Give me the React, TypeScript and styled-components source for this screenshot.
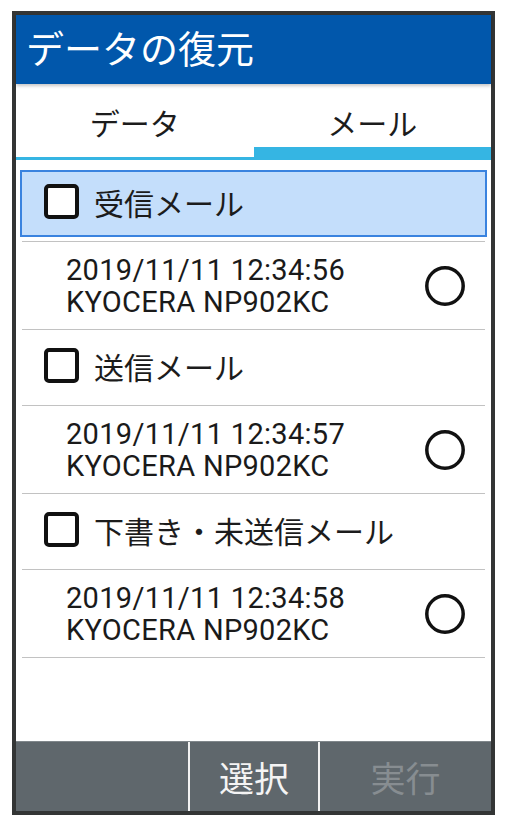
import React from "react";
import styled, { createGlobalStyle } from "styled-components";

const GlobalStyle = createGlobalStyle`
  html, body {
    margin: 0;
    padding: 0;
    background: #ffffff;
  }
  body {
    font-family: Roboto, "Noto Sans CJK JP", sans-serif;
  }
  * { box-sizing: border-box; }
`;

const Page = styled.div`
  padding: 11px 0 0 12px;
`;

const Frame = styled.div`
  width: 483px;
  height: 804px;
  border: 4px solid #333535;
  display: flex;
  flex-direction: column;
  background: #ffffff;
`;

const TitleBar = styled.header`
  height: 69px;
  flex: none;
  background: #0157ab;
  color: #ffffff;
  display: flex;
  align-items: center;
  padding-left: 10px;
  font-size: 38px;
  line-height: 1;
  position: relative;
  z-index: 1;
  box-shadow: 0 2px 3px rgba(0, 0, 0, 0.22);
`;

const Tabs = styled.nav`
  height: 76px;
  flex: none;
  display: grid;
  grid-template-columns: 1fr 1fr;
`;

const Tab = styled.div<{ $active?: boolean }>`
  display: flex;
  align-items: center;
  justify-content: center;
  font-size: 30px;
  color: #1c1c1c;
  box-shadow: inset 0 ${(p) => (p.$active ? "-13px" : "-3px")} 0 #35b5e3;
`;

const List = styled.div`
  flex: 1;
  padding: 6px 6px 0 6px;
  display: flex;
  flex-direction: column;
`;

const GroupRow = styled.div`
  height: 76px;
  border-bottom: 1px solid #c2c2c2;
  padding: 4px 0;
  display: flex;
`;

const GroupInner = styled.div<{ $selected?: boolean }>`
  flex: 1;
  margin: 0 -2px;
  border: 2px solid ${(p) => (p.$selected ? "#3a83df" : "transparent")};
  background: ${(p) => (p.$selected ? "#c4defb" : "transparent")};
  display: flex;
  align-items: center;
  padding: 0 0 4px 22px;
  gap: 15px;
  font-size: 30px;
  color: #1c1c1c;
`;

const CheckBox = styled.span`
  width: 35px;
  height: 35px;
  border: 4px solid #111111;
  border-radius: 5px;
  background: #ffffff;
  flex: none;
`;

const ItemRow = styled.div`
  height: 88px;
  border-bottom: 1px solid #c2c2c2;
  display: flex;
  align-items: center;
  padding: 0 20px 0 44px;
`;

const ItemText = styled.div`
  flex: 1;
  font-size: 29px;
  line-height: 32px;
  color: #1a1a1a;
  letter-spacing: 0.3px;
`;

const Radio = styled.svg`
  width: 40px;
  height: 40px;
  flex: none;
`;

const Footer = styled.footer`
  height: 70px;
  flex: none;
  background: #5f676c;
  border-top: 1px solid #80878b;
  display: grid;
  grid-template-columns: 172px 130px 1fr;
`;

const FooterCell = styled.div<{ $divider?: boolean; $disabled?: boolean }>`
  display: flex;
  align-items: center;
  justify-content: center;
  border-left: ${(p) => (p.$divider ? "2px solid #f2f2f2" : "none")};
  font-size: 35px;
  color: ${(p) => (p.$disabled ? "#878d91" : "#f4f4f4")};
`;

const RadioIcon = () => (
  <Radio viewBox="0 0 40 40">
    <circle cx="20" cy="20" r="18.2" fill="none" stroke="#111" strokeWidth="3.5" />
  </Radio>
);

type Group = {
  name: string;
  selected?: boolean;
  date: string;
};

const groups: Group[] = [
  { name: "受信メール", selected: true, date: "2019/11/11 12:34:56" },
  { name: "送信メール", date: "2019/11/11 12:34:57" },
  { name: "下書き・未送信メール", date: "2019/11/11 12:34:58" },
];

export default function App() {
  return (
    <>
      <GlobalStyle />
      <Page>
        <Frame>
          <TitleBar>データの復元</TitleBar>
          <Tabs>
            <Tab>データ</Tab>
            <Tab $active>メール</Tab>
          </Tabs>
          <List>
            {groups.map((g) => (
              <React.Fragment key={g.name}>
                <GroupRow>
                  <GroupInner $selected={g.selected}>
                    <CheckBox />
                    <span>{g.name}</span>
                  </GroupInner>
                </GroupRow>
                <ItemRow>
                  <ItemText>
                    <div>{g.date}</div>
                    <div>KYOCERA NP902KC</div>
                  </ItemText>
                  <RadioIcon />
                </ItemRow>
              </React.Fragment>
            ))}
          </List>
          <Footer>
            <FooterCell />
            <FooterCell $divider>選択</FooterCell>
            <FooterCell $divider $disabled>実行</FooterCell>
          </Footer>
        </Frame>
      </Page>
    </>
  );
}
